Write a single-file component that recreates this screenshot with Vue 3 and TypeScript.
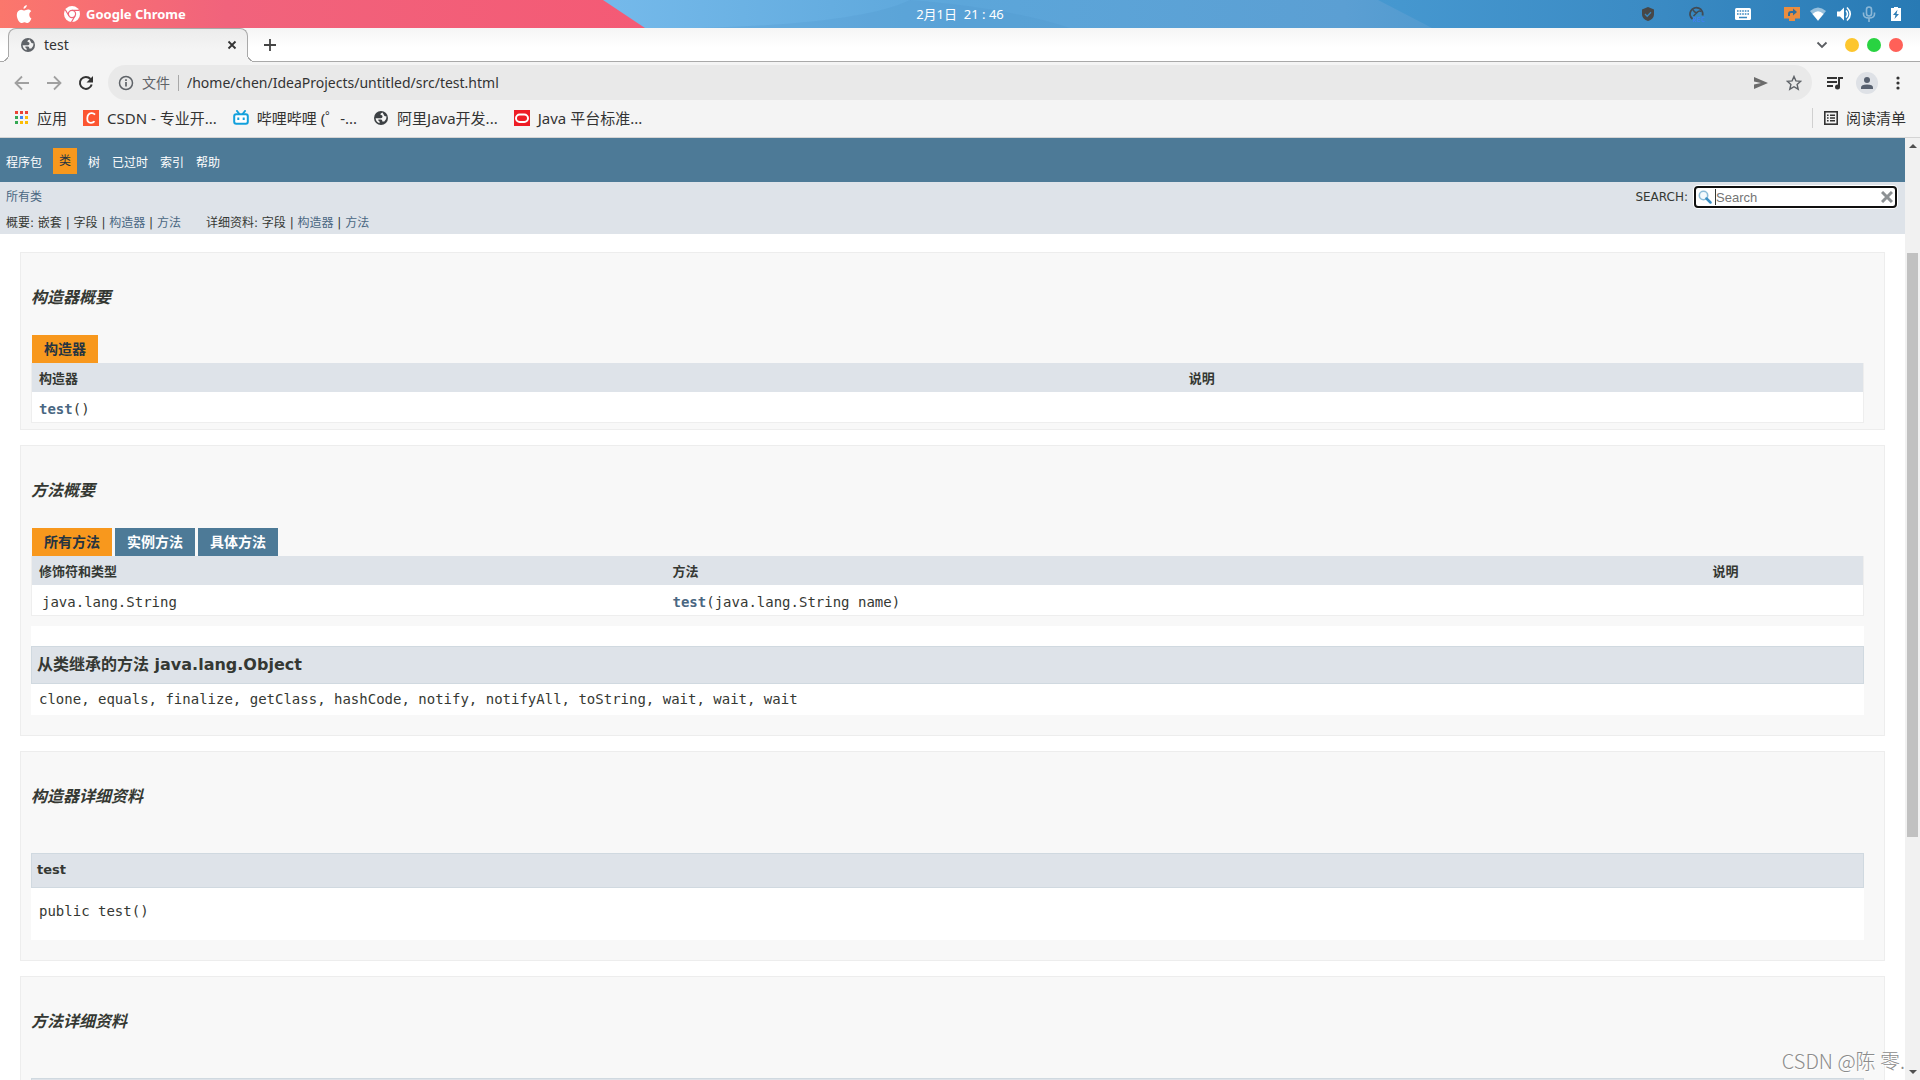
<script setup lang="ts">
import { onMounted, ref } from 'vue'

interface NavItem {
  label: string
  active?: boolean
}

interface SubItem {
  label: string
  link?: boolean
}

interface SubGroup {
  title: string
  items: SubItem[]
}

const navItems: NavItem[] = [
  { label: '程序包' },
  { label: '类', active: true },
  { label: '树' },
  { label: '已过时' },
  { label: '索引' },
  { label: '帮助' },
]

const subGroups: SubGroup[] = [
  {
    title: '概要:',
    items: [{ label: '嵌套' }, { label: '字段' }, { label: '构造器', link: true }, { label: '方法', link: true }],
  },
  {
    title: '详细资料:',
    items: [{ label: '字段' }, { label: '构造器', link: true }, { label: '方法', link: true }],
  },
]

const methodTabs: string[] = ['所有方法', '实例方法', '具体方法']
const activeTab = ref<string>(methodTabs[0])
const query = ref<string>('')
const searchBox = ref<HTMLInputElement | null>(null)

onMounted(() => searchBox.value?.focus())
</script>

<template>
  <div class="desktop">
    <header class="menubar">
      <svg class="wallpaper" viewBox="0 0 1920 28" preserveAspectRatio="none" aria-hidden="true">
        <defs>
          <linearGradient id="sky" x1="0" x2="1" y1="0" y2="0">
            <stop offset="0.32" stop-color="#74b9ea" />
            <stop offset="0.5" stop-color="#5ca6da" />
            <stop offset="0.7" stop-color="#5b9fd3" />
            <stop offset="0.75" stop-color="#519acf" />
          </linearGradient>
          <linearGradient id="rose" x1="0" x2="1" y1="0" y2="0">
            <stop offset="0" stop-color="#fb776c" />
            <stop offset="0.35" stop-color="#f1637c" />
            <stop offset="1" stop-color="#f45a75" />
          </linearGradient>
          <linearGradient id="deep" x1="0" x2="1" y1="0" y2="0">
            <stop offset="0" stop-color="#4698d0" />
            <stop offset="0.5" stop-color="#3b8bc4" />
            <stop offset="1" stop-color="#287ab4" />
          </linearGradient>
        </defs>
        <rect width="1920" height="28" fill="url(#sky)" />
        <path d="M910 0Q1010 8 1070 28H700Q860 24 910 0Z" fill="#4a90c8" opacity="0.2" />
        <path d="M1378 0H1920V28H1432Z" fill="url(#deep)" />
        <path d="M0 0H603L645 28H0Z" fill="url(#rose)" />
      </svg>
      <div class="menu-left">
        <svg width="16" height="20" viewBox="0 0 16 20" fill="#fff" aria-hidden="true">
          <path d="M10.8 1c.1 1.9-1.5 3.8-3.3 3.8C7.300 3 9 1.200 10.800 1ZM13.300 10.600c0-1.700 1-2.700 1.900-3.300-1-1.400-2.300-1.700-3.200-1.700-1.500 0-2.700.9-3.500.9S6.500 5.700 5.100 5.700C2.700 5.800.8 7.700.8 11c0 3.800 2.600 8 4.500 8 1.100 0 1.800-.8 3.200-.8s2 .8 3.100.8c1.600 0 3.100-2.600 3.800-4.500-1.500-.7-2.100-2.100-2.100-3.900Z" />
        </svg>
        <svg class="chrome" width="16" height="16" viewBox="0 0 16 16" aria-hidden="true">
          <circle cx="8" cy="8" r="8" fill="#fff" />
          <circle cx="8" cy="8" r="3.600" fill="none" stroke="#ef6578" stroke-width="1.200" />
          <path d="M8 4.400H15.200M4.900 9.800 1.300 3.800M11.100 9.800 7.500 16" stroke="#ef6578" stroke-width="1.200" />
        </svg>
        <strong>Google Chrome</strong>
      </div>
      <time class="clock">2月1日&nbsp; 21 : 46</time>
      <div class="tray">
        <svg width="14" height="14" viewBox="0 0 14 14" aria-hidden="true"><path d="M7 0 13 2.500V7c0 3.500-2.500 6-6 7C3.500 13 1 10.500 1 7V2.500Z" fill="#474747" /><path d="m4 7 2.200 2.200L10 5.300" fill="none" stroke="#3a88bf" stroke-width="1.300" /></svg>
        <svg class="rec" width="16" height="16" viewBox="0 0 16 16" aria-hidden="true"><path d="M3.500 13A6.300 6.300 0 1 1 13.500 9.500" fill="none" stroke="#414b55" stroke-width="1.900" /><path d="M4 3.500q1.500 3.500 4 3 2-2.500 4.500-1M8 6.500 4.500 10" fill="none" stroke="#414b55" stroke-width="1.500" /><path d="M4.500 16v-4.500h2v2h-2l2.500 2.500M11 11.500H8.500v4H11M8.500 13.500H11M15.500 11.500H13v4h2.500" fill="none" stroke="#3e80e8" /></svg>
        <svg class="keys" width="16" height="14" viewBox="0 0 16 14" aria-hidden="true"><rect y="1" width="16" height="12" rx="1.500" fill="#fff" /><path d="M2 4h12M2 7h12" stroke="#3a88bf" stroke-width="1.600" stroke-dasharray="1.600 1" /><path d="M4 10.500h8" stroke="#3a88bf" stroke-width="1.500" /></svg>
        <svg class="cast" width="16" height="16" viewBox="0 0 16 16" aria-hidden="true"><path d="M0 1h16v11.500h-5V15H5v-2.500H0Z" fill="#ea8d3f" /><path d="M5 10V8q0-2 2-2h3" fill="none" stroke="#2f6d9c" stroke-width="2" /><path d="m9 2.500 4 3.500-4 3.500Z" fill="#2f6d9c" /></svg>
        <svg width="16" height="14" viewBox="0 0 16 14" aria-hidden="true"><path d="M0 4Q8-3 16 4L8 14Z" fill="#fff" opacity="0.5" /><path d="M2.500 7Q8 1.500 13.500 7L8 13.500Z" fill="#fff" /></svg>
        <svg width="16" height="16" viewBox="0 0 16 16" aria-hidden="true"><path d="M1 5.500h3L8 1.500v13l-4-4H1Z" fill="#fff" /><path d="M10 4.500q3 3.500 0 7M11 1.500q6.500 6.500 0 13" fill="none" stroke="#fff" stroke-width="1.600" /></svg>
        <svg width="14" height="16" viewBox="0 0 14 16" opacity="0.45" aria-hidden="true"><rect x="4.500" y="1" width="5" height="9" rx="2.500" fill="none" stroke="#fff" stroke-width="1.600" /><path d="M1.500 6.500V8q0 4 5.500 4t5.500-4V6.500M7 12v4" fill="none" stroke="#fff" stroke-width="1.600" /></svg>
        <svg class="battery" width="16" height="16" viewBox="0 0 16 16" aria-hidden="true"><path d="M6 1h4v1h3v13H3V2h3Z" fill="#fff" /><path d="M9.500 3.800 5 9h2.500L6.500 13 11 8H8.500Z" fill="#2f7db5" /></svg>
      </div>
    </header>

    <div class="tabstrip">
      <div class="tab">
        <svg width="14" height="14" viewBox="0 0 14 14" aria-hidden="true"><circle cx="7" cy="7" r="7" fill="#5f6368" /><path d="M8.500 1.400Q6 2 6.500 4 8.500 3.500 8.500 5.500T6.500 7.200H1.600Q2 11 5.600 12.300V10.500Q4 10 4.300 8.500h3q1.200.5 1 2h2Q12.800 8.500 12.500 5.500L10.500 5Z" fill="#f1f1f1" /></svg>
        <span class="tab-title">test</span>
        <button class="icon-btn" aria-label="关闭标签页"><svg width="10" height="10" viewBox="0 0 10 10"><path d="m1.500 1.500 7 7m0-7-7 7" stroke="#333" stroke-width="1.800" /></svg></button>
      </div>
      <button class="icon-btn plus" aria-label="新标签页"><svg width="12" height="12" viewBox="0 0 12 12"><path d="M6 0v12M0 6h12" stroke="#444" stroke-width="1.800" /></svg></button>
      <div class="window-controls">
        <button class="icon-btn" aria-label="搜索标签页"><svg width="12" height="8" viewBox="0 0 12 8"><path d="m1.500 1.500 4.500 4.500 4.500-4.500" fill="none" stroke="#5a5d61" stroke-width="1.800" /></svg></button>
        <button class="dot yellow" aria-label="最小化"></button>
        <button class="dot green" aria-label="最大化"></button>
        <button class="dot red" aria-label="关闭"></button>
      </div>
    </div>

    <div class="toolbar">
      <div class="history">
        <button class="icon-btn" aria-label="后退"><svg width="16" height="16" viewBox="0 0 16 16"><path d="M15 8H2m6-6.500L1.500 8 8 14.500" fill="none" stroke="#a0a0a0" stroke-width="1.800" /></svg></button>
        <button class="icon-btn" aria-label="前进"><svg width="16" height="16" viewBox="0 0 16 16"><path d="M1 8h13M8 1.500 14.500 8 8 14.500" fill="none" stroke="#a0a0a0" stroke-width="1.800" /></svg></button>
        <button class="icon-btn" aria-label="重新加载"><svg width="16" height="16" viewBox="0 0 16 16"><path d="M13.700 9.500A6 6 0 1 1 12.500 4" fill="none" stroke="#333" stroke-width="2" /><path d="M15 1v6.500H8.500Z" fill="#333" /></svg></button>
      </div>
      <div class="omnibox">
        <svg width="16" height="16" viewBox="0 0 16 16" aria-hidden="true"><circle cx="8" cy="8" r="6.500" fill="none" stroke="#5f6368" stroke-width="1.500" /><path d="M8 7v4.500M8 4.200v1.700" stroke="#5f6368" stroke-width="1.700" /></svg>
        <span class="scheme">文件</span>
        <input class="url" aria-label="地址" value="/home/chen/IdeaProjects/untitled/src/test.html" />
        <button class="icon-btn" aria-label="发送"><svg width="16" height="14" viewBox="0 0 16 14"><path d="M1 1 15 7 1 13V8.500L8 7 1 5.500Z" fill="#6b6b6b" /></svg></button>
        <button class="icon-btn" aria-label="收藏"><svg width="16" height="16" viewBox="0 0 16 16"><path d="m8 1.500 1.900 4.400 4.800.4-3.600 3.200 1.100 4.700L8 11.700l-4.200 2.500 1.100-4.700L1.300 6.300l4.800-.4Z" fill="none" stroke="#5f6368" stroke-width="1.400" /></svg></button>
      </div>
      <div class="actions">
        <button class="icon-btn" aria-label="媒体"><svg width="18" height="14" viewBox="0 0 18 14"><path d="M1 2h10M1 6h10M1 10h6" stroke="#333" stroke-width="1.800" /><path d="M13 11V2h4" fill="none" stroke="#333" stroke-width="2" /><circle cx="11.500" cy="11" r="2.500" fill="#333" /></svg></button>
        <button class="icon-btn" aria-label="个人资料"><svg width="22" height="22" viewBox="0 0 22 22"><circle cx="11" cy="11" r="11" fill="#dee1e6" /><circle cx="11" cy="8" r="3" fill="#57606f" /><path d="M5 17v-1.500Q5 12.500 11 12.500t6 3V17Z" fill="#57606f" /></svg></button>
        <button class="icon-btn" aria-label="菜单"><svg width="16" height="14" viewBox="0 0 16 14" fill="#333"><circle cx="8" cy="2" r="1.600" /><circle cx="8" cy="7" r="1.600" /><circle cx="8" cy="12" r="1.600" /></svg></button>
      </div>
    </div>

    <nav class="bookmarks" aria-label="书签">
      <a href="#"><svg width="16" height="16" viewBox="0 0 16 16" aria-hidden="true"><path d="M2 2.500h13" stroke="#ea4335" stroke-width="3" stroke-dasharray="3 2" /><path d="M2 7.500h3M2 12.500h3" stroke="#34a853" stroke-width="3" /><path d="M7 7.500h3" stroke="#4285f4" stroke-width="3" /><path d="M12 7.500h3M7 12.500h3M12 12.500h3" stroke="#fbbc04" stroke-width="3" /></svg>应用</a>
      <a href="#"><svg width="16" height="16" viewBox="0 0 16 16" aria-hidden="true"><rect width="16" height="16" fill="#fc5531" /><path d="M12 4.700Q10.500 3 8.400 3.200 4.500 3.500 4.300 8.200T8 12.800q2.300 0 3.500-1.500" fill="none" stroke="#fff" stroke-width="1.800" /></svg>CSDN - 专业开...</a>
      <a href="#"><svg width="16" height="16" viewBox="0 0 16 16" aria-hidden="true"><path d="m4 1 2 2.500M12 1l-2 2.500" stroke="#12a0dc" stroke-width="2" stroke-linecap="round" /><rect x="1.200" y="4.200" width="13.600" height="9.600" rx="2" fill="#fff" stroke="#12a0dc" stroke-width="2" /><path d="M5.300 7.500v2.500M10.700 7.500v2.500" stroke="#12a0dc" stroke-width="2" /></svg>哔哩哔哩 (゜-...</a>
      <a href="#"><svg width="16" height="16" viewBox="-1 -1 16 16" aria-hidden="true"><circle cx="7" cy="7" r="7" fill="#3c4043" /><path d="M8.500 1.400Q6 2 6.500 4 8.500 3.500 8.500 5.500T6.500 7.200H1.600Q2 11 5.600 12.300V10.500Q4 10 4.300 8.500h3q1.200.5 1 2h2Q12.800 8.500 12.500 5.500L10.500 5Z" fill="#f5f5f5" /></svg>阿里Java开发...</a>
      <a href="#"><svg width="16" height="16" viewBox="0 0 16 16" aria-hidden="true"><rect width="16" height="16" fill="#ee1c25" /><rect x="2" y="4.500" width="12" height="7.500" rx="3.700" fill="none" stroke="#fff" stroke-width="2" /></svg>Java 平台标准...</a>
      <a class="reading" href="#"><svg width="14" height="14" viewBox="0 0 14 14" aria-hidden="true"><rect x=".8" y=".8" width="12.400" height="12.400" fill="none" stroke="#333" stroke-width="1.600" /><path d="M3 4.200h1.600M3 7h1.600M3 9.800h1.600M6 4.200h5M6 7h5M6 9.800h5" stroke="#333" stroke-width="1.500" /></svg>阅读清单</a>
    </nav>

    <div class="viewport">
      <main class="doc">
        <nav class="topnav" aria-label="导航">
          <a v-for="item in navItems" :key="item.label" href="#" :class="{ active: item.active }">{{ item.label }}</a>
        </nav>
        <div class="subnav">
          <div class="subnav-left">
            <a href="#">所有类</a>
            <div class="groups">
              <div v-for="group in subGroups" :key="group.title">
                {{ group.title }}
                <template v-for="(item, i) in group.items" :key="item.label">
                  <template v-if="i > 0"> | </template>
                  <a v-if="item.link" href="#">{{ item.label }}</a>
                  <template v-else>{{ item.label }}</template>
                </template>
              </div>
            </div>
          </div>
          <form class="search" @submit.prevent>
            <label for="search">SEARCH:</label>
            <div class="search-box">
              <svg width="14" height="14" viewBox="0 0 14 14" aria-hidden="true"><circle cx="5.500" cy="5.500" r="4.200" fill="#f4fafd" stroke="#8dbdd8" stroke-width="1.600" /><path d="m8.500 8.500 4 4" stroke="#3a8fc4" stroke-width="2.500" stroke-linecap="round" /></svg>
              <input id="search" ref="searchBox" v-model="query" type="text" placeholder="Search" autocomplete="off" />
              <button type="reset" class="icon-btn" aria-label="清除"><svg width="12" height="12" viewBox="0 0 12 12"><path d="m1 1 10 10M11 1 1 11" stroke="#8d9194" stroke-width="3" /></svg></button>
            </div>
          </form>
        </div>

        <div class="sections">
          <section>
            <h3>构造器概要</h3>
            <div class="tabs"><span class="doc-tab active">构造器</span></div>
            <table>
              <colgroup><col class="c-ctor" /><col /></colgroup>
              <thead><tr><th scope="col">构造器</th><th scope="col">说明</th></tr></thead>
              <tbody><tr><td><code><a href="#">test</a>()</code></td><td></td></tr></tbody>
            </table>
          </section>

          <section class="inherits">
            <h3>方法概要</h3>
            <div class="tabs">
              <button v-for="tab in methodTabs" :key="tab" class="doc-tab" :class="{ active: tab === activeTab }" @click="activeTab = tab">{{ tab }}</button>
            </div>
            <table>
              <colgroup><col class="c-type" /><col class="c-method" /><col /></colgroup>
              <thead><tr><th scope="col">修饰符和类型</th><th scope="col">方法</th><th scope="col">说明</th></tr></thead>
              <tbody><tr><td class="type"><code>java.lang.String</code></td><td><code><a href="#">test</a>(java.lang.String name)</code></td><td></td></tr></tbody>
            </table>
            <div class="block inherited">
              <h3>从类继承的方法 java.lang.Object</h3>
              <code>clone, equals, finalize, getClass, hashCode, notify, notifyAll, toString, wait, wait, wait</code>
            </div>
          </section>

          <section class="detail">
            <h3>构造器详细资料</h3>
            <div class="block">
              <h4>test</h4>
              <code>public test()</code>
            </div>
          </section>

          <section class="detail">
            <h3>方法详细资料</h3>
            <div class="block">
              <div class="block-bar"></div>
            </div>
          </section>
        </div>
      </main>
      <div class="scrollbar" aria-hidden="true">
        <span class="arrow up"></span>
        <div class="track"><div class="thumb"></div></div>
        <span class="arrow down"></span>
      </div>
    </div>
    <div class="watermark">CSDN @陈 零.</div>
  </div>
</template>

<style>
body {
  margin: 0;
}
</style>

<style scoped>
* {
  box-sizing: border-box;
}

.desktop {
  position: relative;
  display: flex;
  flex-direction: column;
  height: 100vh;
  overflow: hidden;
  background: #fff;
  color: #333;
  font-family: 'Noto Sans', 'Noto Sans CJK SC', sans-serif;
  font-size: 14px;
}

svg {
  display: block;
  flex: none;
}

a {
  text-decoration: none;
}

button {
  border: 0;
  padding: 0;
  background: none;
  font: inherit;
  cursor: pointer;
}

.icon-btn {
  display: flex;
  align-items: center;
  justify-content: center;
  flex: none;
}

/* desktop menu bar */
.menubar {
  position: relative;
  display: grid;
  grid-template-columns: 1fr auto 1fr;
  align-items: center;
  flex: none;
  height: 28px;
  padding: 0 16px;
  color: #fff;
  font-size: 13px;
  line-height: 18px;
}

.wallpaper {
  position: absolute;
  inset: 0;
  width: 100%;
  height: 100%;
}

.menu-left,
.clock,
.tray {
  position: relative;
  display: flex;
  align-items: center;
}

.menu-left strong {
  font-weight: 700;
}

.chrome {
  margin: 0 6px 0 32px;
}

.tray {
  justify-content: flex-end;
  gap: 10px;
}

.rec {
  margin-left: 24px;
}

.keys {
  margin-left: 20px;
}

.cast {
  margin-left: 23px;
}

.battery {
  margin-left: 2px;
}

/* tab strip */
.tabstrip {
  display: flex;
  align-items: center;
  flex: none;
  height: 34px;
  padding: 0 17px 0 8px;
  border-bottom: 1px solid #a9a9a9;
  background: linear-gradient(#f5f5f5, #fff 60%);
}

.tab {
  position: relative;
  display: flex;
  align-items: center;
  align-self: flex-start;
  width: 240px;
  height: 34px;
  padding: 0 10px 2px 12px;
  border: 1px solid #a9a9a9;
  border-bottom: 0;
  border-radius: 8px 8px 0 0;
  background: linear-gradient(#ececec, #f4f4f4 60%);
}

.tab::before,
.tab::after {
  content: '';
  position: absolute;
  bottom: 0;
  width: 8px;
  height: 8px;
}

.tab::before {
  left: -8px;
  background: radial-gradient(circle at 0 0, #fff 7px, #a9a9a9 7px 8px, #f4f4f4 8px);
}

.tab::after {
  right: -8px;
  background: radial-gradient(circle at 100% 0, #fff 7px, #a9a9a9 7px 8px, #f4f4f4 8px);
}

.tab-title {
  flex: 1;
  margin-left: 9px;
}

.plus {
  margin-left: 16px;
}

.window-controls {
  display: flex;
  align-items: center;
  gap: 8px;
  margin-left: auto;
}

.window-controls .icon-btn {
  margin-right: 9px;
}

.dot {
  width: 14px;
  height: 14px;
  border-radius: 50%;
}

.yellow {
  background: #fdc62e;
}

.green {
  background: #29d341;
}

.red {
  background: #ff6058;
}

/* address row */
.toolbar {
  display: flex;
  align-items: center;
  gap: 14px;
  flex: none;
  height: 42px;
  padding: 0 14px 1px;
  background: #f4f4f4;
}

.history {
  display: flex;
  gap: 16px;
}

.actions {
  display: flex;
  align-items: center;
  gap: 12px;
}

.omnibox {
  display: flex;
  align-items: center;
  flex: 1;
  height: 35px;
  padding: 0 10px;
  border-radius: 18px;
  background: #e9e9e9;
}

.scheme {
  margin: 0 8px;
  padding-right: 8px;
  border-right: 1px solid #a8a8a8;
  color: #5f6368;
  line-height: 16px;
}

.url {
  flex: 1;
  min-width: 0;
  border: 0;
  padding: 0;
  outline: 0;
  background: none;
  color: #333;
  font: inherit;
}

.omnibox .icon-btn {
  margin-left: 17px;
}

/* bookmarks row */
.bookmarks {
  display: flex;
  align-items: center;
  gap: 16px;
  flex: none;
  height: 34px;
  padding: 0 14px 5px 13px;
  border-bottom: 1px solid #d4d4d4;
  background: #f4f4f4;
}

.bookmarks a {
  display: flex;
  align-items: center;
  gap: 8px;
  color: #333;
  font-size: 15px;
  line-height: 20px;
  white-space: nowrap;
}

.bookmarks .reading {
  margin-left: auto;
  padding-left: 11px;
  border-left: 1px solid #d0d0d0;
}

/* document */
.viewport {
  display: flex;
  flex: 1;
  min-height: 0;
}

.doc {
  flex: 1;
  min-width: 0;
  overflow: hidden;
  color: #353833;
  font-family: 'DejaVu Sans', 'Noto Sans CJK SC', sans-serif;
}

.doc a {
  color: #4a6782;
}

.topnav {
  display: flex;
  align-items: center;
  gap: 12px;
  height: 44px;
  padding: 2px 6px 0;
  background: #4d7a97;
  font-size: 12px;
}

.doc .topnav a {
  color: #fff;
}

.doc .topnav a.active {
  margin: 0 -1px;
  padding: 0 6px;
  background: #f8981d;
  color: #253441;
  line-height: 26px;
}

.subnav {
  display: flex;
  justify-content: space-between;
  height: 52px;
  padding: 2px 8px 0 6px;
  background: #dee3e9;
  font-size: 12px;
  line-height: 26px;
}

.groups {
  display: flex;
  gap: 25px;
}

.search {
  display: flex;
  align-items: center;
  align-self: flex-start;
  gap: 6px;
  padding-top: 2px;
  line-height: 22px;
}

.search-box {
  display: flex;
  align-items: center;
  width: 203px;
  height: 22px;
  padding: 0 2px;
  border: 2px solid #101010;
  border-radius: 4px;
  background: #fff;
  box-shadow: 0 0 0 1px #fff;
}

.search-box input {
  flex: 1;
  min-width: 0;
  height: 16px;
  margin-left: 3px;
  border: 0;
  border-left: 1px solid transparent;
  padding: 0;
  outline: 0;
  background: none;
  color: #353833;
  caret-color: transparent;
  font-family: 'Liberation Sans', Arial, sans-serif;
  font-size: 13px;
}

.search-box input:focus {
  border-left-color: #353833;
}

.sections {
  display: flex;
  flex-direction: column;
  gap: 15px;
  padding: 18px 20px 10px;
}

section {
  padding: 34px 20px 6px 10px;
  border: 1px solid #ededed;
  background: #f8f8f8;
}

section.inherits,
section.detail {
  padding-bottom: 20px;
}

section > h3 {
  margin: 0 0 26px;
  font-size: 16px;
  font-style: italic;
  line-height: 22px;
}

section.detail > h3 {
  margin-bottom: 45px;
}

.tabs {
  display: flex;
  gap: 3px;
  padding-left: 1px;
}

.doc-tab {
  height: 28px;
  padding: 0 12px;
  background: #4d7a97;
  color: #fff;
  font-size: 14px;
  font-weight: bold;
  line-height: 28px;
}

.doc-tab.active {
  background: #f8981d;
  color: #253441;
}

table {
  width: 100%;
  border: 1px solid #eee;
  border-top: 0;
  border-spacing: 0;
  background: #fff;
  table-layout: fixed;
}

.c-ctor {
  width: 62.8%;
}

.c-type {
  width: 34.6%;
}

.c-method {
  width: 56.8%;
}

th {
  height: 29px;
  padding: 3px 7px 0;
  background: #dee3e9;
  font-size: 13px;
  line-height: 20px;
  text-align: left;
}

td {
  height: 30px;
  padding: 3px 7px 0;
  line-height: 20px;
}

td.type {
  padding-left: 10px;
}

code {
  font-family: 'DejaVu Sans Mono', 'Noto Sans CJK SC', monospace;
  font-size: 14px;
}

td a {
  font-weight: bold;
}

.block {
  background: #fff;
}

.block h3,
.block h4,
.block-bar {
  margin: 0;
  padding: 8px 5px;
  border: 1px solid #d0d9e0;
  background: #dee3e9;
}

.block h3 {
  font-size: 16px;
  line-height: 20px;
}

.block h4 {
  padding-bottom: 9px;
  font-size: 13px;
  line-height: 16px;
}

.block-bar {
  height: 35px;
}

.block code {
  display: block;
  padding: 11px 8px 17px;
  line-height: 24px;
}

.block.inherited {
  margin-top: 10px;
  padding-top: 20px;
}

.inherited code {
  padding: 3px 8px 4px;
}

/* scrollbar */
.scrollbar {
  display: flex;
  flex-direction: column;
  align-items: center;
  flex: none;
  width: 15px;
  padding: 6px 0;
  background: #f1f1f1;
}

.arrow {
  border: 4px solid transparent;
}

.up {
  border-top: 0;
  border-bottom-color: #505050;
}

.down {
  border-bottom: 0;
  border-top-color: #505050;
}

.track {
  flex: 1;
  width: 11px;
  margin: 5px 0;
}

.thumb {
  height: 64%;
  margin-top: 100px;
  background: #c1c1c1;
}

.watermark {
  position: absolute;
  right: 15px;
  bottom: 5px;
  color: #8c8c8c;
  font-family: 'Noto Sans CJK SC', sans-serif;
  font-size: 20px;
  font-weight: 300;
  line-height: 28px;
  text-shadow: 1px 1px 0 #fff;
}
</style>
